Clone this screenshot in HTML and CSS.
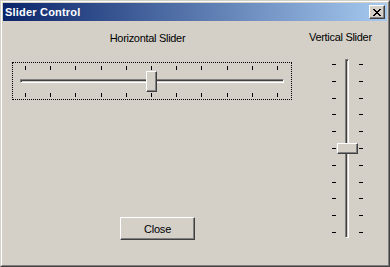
FILE: index.html
```html
<!DOCTYPE html>
<html>
<head>
<meta charset="utf-8">
<title>Slider Control</title>
<link rel="stylesheet" href="styles.css">
</head>
<body>
<div class="window">
  <div class="frame">
    <div class="titlebar">
      <span class="title">Slider Control</span>
      <button class="tb-close" aria-label="Close">
        <svg width="8" height="7" viewBox="0 0 8 7" shape-rendering="crispEdges"><path fill="#000" d="M0 0h2v1H0z M6 0h2v1H6z M1 1h2v1H1z M5 1h2v1H5z M2 2h4v1H2z M3 3h2v1H3z M2 4h4v1H2z M1 5h2v1H1z M5 5h2v1H5z M0 6h2v1H0z M6 6h2v1H6z"/></svg>
      </button>
    </div>
    <div class="client">
      <div class="left">
        <div class="label hlabel">Horizontal Slider</div>
        <div class="hslider">
          <div class="hticks"><i></i><i></i><i></i><i></i><i></i><i></i><i></i><i></i><i></i><i></i><i></i></div>
          <div class="htrack"></div>
          <div class="hticks"><i></i><i></i><i></i><i></i><i></i><i></i><i></i><i></i><i></i><i></i><i></i></div>
          <div class="hthumb"></div>
        </div>
        <button class="btn">Close</button>
      </div>
      <div class="right">
        <div class="label vlabel">Vertical Slider</div>
        <div class="vslider">
          <div class="vticks"><i></i><i></i><i></i><i></i><i></i><i></i><i></i><i></i><i></i><i></i><i></i></div>
          <div class="vtrack"></div>
          <div class="vticks"><i></i><i></i><i></i><i></i><i></i><i></i><i></i><i></i><i></i><i></i><i></i></div>
          <div class="vthumb"></div>
        </div>
      </div>
    </div>
  </div>
</div>
</body>
</html>
```

FILE: styles.css
```css
html, body {
  margin: 0;
  padding: 0;
  background: #d4d0c8;
}

.window {
  width: 390px;
  height: 267px;
  box-sizing: border-box;
  border: 1px solid;
  border-color: #d4d0c8 #404040 #404040 #d4d0c8;
  background: #d4d0c8;
  font-family: "Liberation Sans", Arial, sans-serif;
  font-size: 11px;
  color: #000;
}

.frame {
  height: 100%;
  box-sizing: border-box;
  border: 1px solid;
  border-color: #ffffff #808080 #808080 #ffffff;
  padding: 1px;
  display: flex;
  flex-direction: column;
}

.titlebar {
  height: 18px;
  flex: none;
  background: linear-gradient(to right, #0a246a, #a6caf0);
  display: flex;
  align-items: center;
  justify-content: space-between;
  padding: 0 2px;
}

.title {
  color: #fff;
  font-weight: bold;
  font-size: 11px;
  line-height: 13px;
  letter-spacing: 0.2px;
}

.tb-close {
  width: 16px;
  height: 14px;
  padding: 0;
  margin: 0;
  box-sizing: border-box;
  border: 1px solid;
  border-color: #ffffff #404040 #404040 #ffffff;
  box-shadow: inset -1px -1px #808080;
  background: #d4d0c8;
  display: flex;
  align-items: center;
  justify-content: center;
}

.tb-close svg {
  display: block;
}

.client {
  flex: 1;
  display: flex;
  margin-top: 1px;
}

.left {
  width: 297px;
  flex: none;
  box-sizing: border-box;
  padding-left: 9px;
  display: flex;
  flex-direction: column;
  align-items: flex-start;
}

.label {
  line-height: 13px;
  font-size: 11px;
  white-space: nowrap;
  letter-spacing: -0.3px;
}

.hlabel {
  margin-top: 10px;
  width: 271px;
  text-align: center;
}

.hslider {
  position: relative;
  margin-top: 17px;
  width: 280px;
  height: 38px;
  box-sizing: border-box;
  border: 1px dotted #000;
  padding-top: 3px;
}

.hticks {
  display: flex;
  justify-content: space-between;
  margin-left: 12px;
  width: 253px;
  height: 4px;
}

.hticks i {
  display: block;
  width: 1px;
  background: #000;
}

.htrack {
  margin: 9px 0 10px 7px;
  width: 264px;
  height: 4px;
  box-sizing: border-box;
  border: 1px solid;
  border-color: #808080 #ffffff #ffffff #808080;
  box-shadow: inset 1px 1px #404040, inset -1px -1px #d4d0c8;
}

.hthumb {
  position: absolute;
  left: 133px;
  top: 8px;
  width: 11px;
  height: 21px;
  box-sizing: border-box;
  border: 1px solid;
  border-color: #ffffff #404040 #404040 #ffffff;
  box-shadow: inset -1px -1px #808080;
  background: #d4d0c8;
}

.btn {
  margin-top: 117px;
  margin-left: 108px;
  width: 75px;
  height: 23px;
  padding: 0;
  box-sizing: border-box;
  border: 1px solid;
  border-color: #ffffff #404040 #404040 #ffffff;
  box-shadow: inset -1px -1px #808080;
  background: #d4d0c8;
  font-family: "Liberation Sans", Arial, sans-serif;
  font-size: 11px;
  letter-spacing: -0.2px;
  color: #000;
}

.right {
  flex: 1;
  display: flex;
  flex-direction: column;
  align-items: flex-start;
}

.vlabel {
  margin: 9px 0 0 9px;
}

.vslider {
  position: relative;
  margin: 15px 0 0 32px;
  display: flex;
  align-items: flex-start;
  height: 179px;
}

.vticks {
  display: flex;
  flex-direction: column;
  justify-content: space-between;
  margin-top: 5px;
  width: 4px;
  height: 169px;
}

.vticks i {
  display: block;
  height: 1px;
  background: #000;
}

.vtrack {
  margin: 0 10px 0 9px;
  width: 4px;
  height: 179px;
  box-sizing: border-box;
  border: 1px solid;
  border-color: #808080 #ffffff #ffffff #808080;
  box-shadow: inset 1px 1px #404040, inset -1px -1px #d4d0c8;
}

.vthumb {
  position: absolute;
  left: 5px;
  top: 84px;
  width: 21px;
  height: 11px;
  box-sizing: border-box;
  border: 1px solid;
  border-color: #ffffff #404040 #404040 #ffffff;
  box-shadow: inset -1px -1px #808080;
  background: #d4d0c8;
}
```
